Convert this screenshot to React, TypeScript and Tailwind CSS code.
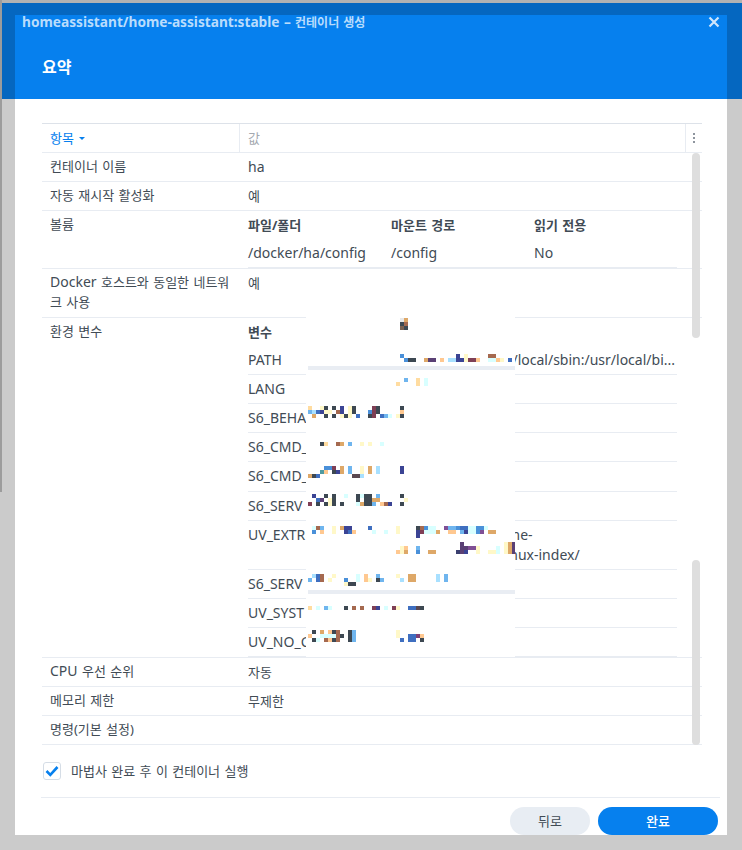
import type { ReactNode } from "react";

// ── Redaction mosaic (pixel cells in page coordinates, 4px grid) ──────────────

const dk = "#3d4852";
const nv = "#3b4494";
const bu = "#3f6fc0";
const bl = "#4a90d9";
const sk = "#6fb5ee";
const lb = "#a8e0ff";
const cy = "#d8ffff";
const py = "#fff8c8";
const ye = "#ffdca0";
const pe = "#ffc890";
const tn = "#dea868";
const br = "#a5694f";
const mr = "#7f3f55";
const pu = "#5a4075";
const vi = "#7f4f95";
const te = "#4f9aa0";
const gr = "#5a4850";

type Cell = [number, string, number?];

const MOSAIC: [number, Cell[]][] = [
  [318, [[400, "#e8e8e8"], [404, tn]]],
  [322, [[400, dk], [404, br]]],
  [326, [[400, "#7a6050"], [404, dk]]],
  [354, [[400, bl], [488, br, 2], [456, nv], [464, py]]],
  [358, [[404, bl], [408, dk, 2], [424, tn], [428, pu, 2], [440, pe], [448, lb, 2], [456, nv, 2], [464, py], [468, mr, 2], [476, pe], [488, cy, 2], [496, pe], [500, py], [508, bu]]],
  [378, [[404, sk], [416, ye], [424, cy]]],
  [382, [[396, ye], [416, ye], [424, cy]]],
  [406, [[308, ye], [320, py], [324, dk], [332, dk], [340, nv], [348, py], [352, dk], [372, mr], [376, dk], [400, dk]]],
  [410, [[308, sk], [312, lb], [316, bu], [320, nv], [324, py, 2], [336, br], [340, nv], [348, py], [352, dk], [368, bl], [372, mr], [376, dk], [400, pe]]],
  [414, [[312, tn], [324, dk], [332, dk], [340, py], [344, dk], [348, py], [356, bu], [368, dk], [372, mr], [380, bu], [384, sk], [388, cy], [396, py], [400, dk]]],
  [442, [[320, dk], [324, ye], [336, br], [340, tn], [348, sk], [360, py], [368, py], [380, cy]]],
  [466, [[324, bl, 2], [332, mr], [340, tn], [348, sk], [360, py], [368, tn], [376, lb], [400, nv]]],
  [470, [[320, te], [324, pe], [332, dk], [336, nv], [340, tn], [348, sk], [360, py], [368, tn], [376, lb], [400, nv]]],
  [474, [[308, tn], [312, dk], [316, bu], [352, gr, 2], [360, lb]]],
  [494, [[312, nv], [324, dk], [332, dk], [344, cy], [356, dk], [360, cy], [364, dk, 2], [376, sk], [400, dk]]],
  [498, [[316, bu], [320, pu], [328, py], [332, dk], [356, dk], [364, dk, 2], [372, tn, 2], [404, py]]],
  [502, [[308, mr], [316, dk], [324, dk], [328, py], [332, dk], [340, dk], [356, cy], [360, tn], [364, dk, 2], [372, sk], [380, pe], [384, br], [388, nv], [400, dk]]],
  [526, [[312, cy], [316, br], [320, sk], [332, py], [340, tn], [344, nv, 2], [368, bu], [396, py], [416, dk], [420, br], [424, bl], [428, cy, 2], [444, vi], [448, sk, 2], [456, bl], [460, bu, 2], [468, cy, 2], [476, bl, 2], [484, cy]]],
  [530, [[312, bl], [320, pe], [332, py], [344, nv], [348, bu], [352, pe], [372, cy], [384, cy], [396, py], [416, nv], [420, mr], [424, cy, 3], [436, tn], [448, pe, 2], [460, sk], [464, nv], [468, cy, 2], [476, bl], [480, vi], [488, tn, 2]]],
  [534, [[416, nv]]],
  [542, [[460, pu], [504, py], [508, tn], [512, pu]]],
  [546, [[400, py], [404, pe], [416, sk], [460, pu, 2], [468, vi, 2], [476, py], [496, cy], [504, py], [508, tn], [512, pu]]],
  [550, [[396, pe], [400, py], [404, tn], [416, bl], [428, tn, 2], [456, "#3a3f6f"], [460, pu], [464, nv], [476, py], [488, py, 2], [496, cy], [504, py], [508, tn], [512, pu]]],
  [574, [[312, lb], [316, bu], [320, br], [332, py], [356, cy], [364, pe], [376, sk], [396, py], [408, tn, 2], [436, lb], [444, sk]]],
  [578, [[308, sk], [316, bu], [320, br], [328, py], [344, bl], [356, cy], [364, pe], [368, py], [376, dk], [380, sk], [400, lb], [408, tn, 2], [436, lb], [444, sk]]],
  [582, [[344, py], [348, dk, 2]]],
  [606, [[308, ye], [316, cy], [324, sk], [328, cy], [344, dk], [352, br], [360, br], [372, mr], [376, nv], [384, cy], [392, mr], [396, py], [408, bu, 2], [416, gr], [420, dk]]],
  [630, [[312, dk], [320, tn], [328, pe], [332, dk], [336, br], [348, dk], [352, sk], [396, py]]],
  [634, [[308, pe], [320, cy, 4], [336, br], [340, dk], [348, dk], [352, sk], [396, py], [408, bu, 2], [416, "#7f3f75"], [420, pe]]],
  [638, [[312, dk], [316, cy], [324, br], [328, pe], [332, dk], [336, br], [348, dk], [352, sk], [400, bu], [408, bu, 2], [420, dk]]],
];

function RedactionMosaic() {
  return (
    <div className="absolute left-[58px] -top-px w-[209px] h-[340px] bg-white">
      <svg width={209} height={340} viewBox="306 317 209 340" shapeRendering="crispEdges" aria-hidden>
        <rect x={308} y={366} width={207} height={4} fill="#e9edf3" />
        <rect x={308} y={590} width={207} height={4} fill="#e9edf3" />
        {MOSAIC.map(([y, cells]) =>
          cells.map(([x, color, n = 1]) => (
            <rect key={`${y}-${x}`} x={x} y={y} width={4 * n} height={4} fill={color} />
          )),
        )}
      </svg>
    </div>
  );
}

// ── Table rows ────────────────────────────────────────────────────────────────

// Latin runs sit a point larger than the Hangul around them in the reference
function Latin({ children }: { children: ReactNode }) {
  return <span className="text-sm">{children}</span>;
}

function Row({ label, children }: { label: ReactNode; children?: ReactNode }) {
  return (
    <div className="flex border-b border-[#e8ecf2]">
      <div className="w-[197px] shrink-0 pl-2 pr-2 pt-[3px] pb-[5px]">{label}</div>
      <div className="flex-1 min-w-0 pl-[9px]">{children}</div>
    </div>
  );
}

function Value({ children }: { children: ReactNode }) {
  return <div className="py-1">{children}</div>;
}

function EnvRow({ name, className, children }: { name: string; className?: string; children?: ReactNode }) {
  return (
    <div className={`flex w-[429px] border-b border-[#e8ecf2] py-1 text-sm ${className ?? ""}`}>
      <div className="w-[143px] shrink-0 overflow-hidden whitespace-nowrap">{name}</div>
      <div className="flex-1 min-w-0">{children}</div>
    </div>
  );
}

function CloseIcon() {
  return (
    <svg width={12} height={12} viewBox="0 0 12 12" fill="none" stroke="#cfe5fb" strokeWidth={2.2} aria-hidden>
      <path d="M1.5 1.5l9 9M10.5 1.5l-9 9" />
    </svg>
  );
}

// ── App ───────────────────────────────────────────────────────────────────────

export default function App() {
  return (
    <div className="relative h-[850px] w-[742px] overflow-hidden bg-[#cbcbcb] pt-[15px] px-[15px] font-['Noto_Sans','Noto_Sans_CJK_KR',sans-serif] text-[13px] leading-5 text-[#414b55] [word-spacing:1px]">
      {/* window edges behind the dialog */}
      <div className="absolute left-0 top-0 h-[3px] w-full bg-[#b2b2b2]" />
      <div className="absolute left-0 top-0 h-[492px] w-[2px] bg-[#9c9c9c]" />
      <div className="absolute left-[2px] right-0 top-[3px] h-[96px] bg-[#0567c0]" />

      <div className="relative flex h-[820px] flex-col overflow-hidden bg-white">
        {/* ── Header ── */}
        <div className="h-[84px] shrink-0 bg-[#0680ee] pl-[7px]">
          <div className="flex h-[14px] items-center justify-between pr-[7px]">
            <span className="whitespace-nowrap text-xs leading-[14px] font-bold text-[#b9dcfc]">
              <span className="text-[13.7px] leading-[14px]">homeassistant/home-assistant:stable –</span> 컨테이너 생성
            </span>
            <CloseIcon />
          </div>
          <h1 className="ml-[20px] mt-[28px] text-base leading-5 font-bold text-white">요약</h1>
        </div>

        {/* ── Summary table ── */}
        <div className="relative mx-[27px] mt-6 w-[660px] border-t border-[#dde2e9]">
          <div className="flex h-[29px] border-b border-[#e8ecf2]">
            <div className="flex w-[198px] shrink-0 items-center gap-[5px] border-r border-[#e8ecf2] pl-2 text-[#0680ee]">
              항목
              <span className="mt-px h-0 w-0 border-x-[3px] border-t-[3px] border-x-transparent border-t-[#0680ee]" />
            </div>
            <div className="flex flex-1 items-center pl-2 text-[#a4a9b0]">값</div>
            <div className="flex w-[17px] shrink-0 flex-col items-center justify-center gap-[2px] border-l border-[#e8ecf2]">
              <span className="h-[2px] w-[2px] bg-[#8e959e]" />
              <span className="h-[2px] w-[2px] bg-[#8e959e]" />
              <span className="h-[2px] w-[2px] bg-[#8e959e]" />
            </div>
          </div>

          <Row label="컨테이너 이름"><Value><Latin>ha</Latin></Value></Row>
          <Row label="자동 재시작 활성화"><Value>예</Value></Row>

          <Row label="볼륨">
            <div className="w-[429px] border-b border-[#e8ecf2]">
              <div className="grid h-[28px] grid-cols-3 pt-1 font-bold">
                <span>파일/폴더</span>
                <span>마운트 경로</span>
                <span>읽기 전용</span>
              </div>
              <div className="grid h-[28px] grid-cols-3 pt-1 text-sm">
                <span>/docker/ha/config</span>
                <span>/config</span>
                <span>No</span>
              </div>
            </div>
          </Row>

          <Row label={<><Latin>Docker</Latin> 호스트와 동일한 네트워크 사용</>}><Value>예</Value></Row>

          <Row label="환경 변수">
            <div className="relative">
              <div className="h-[28px] w-[429px] pt-1 font-bold">변수</div>
              <EnvRow name="PATH">
                <div className="whitespace-nowrap pr-[2px] text-right">/local/sbin:/usr/local/bi...</div>
              </EnvRow>
              <EnvRow name="LANG" />
              <EnvRow name="S6_BEHA" />
              <EnvRow name="S6_CMD_" />
              <EnvRow name="S6_CMD_" className="h-[30px]" />
              <EnvRow name="S6_SERV" />
              <EnvRow name="UV_EXTR">
                <div className="pl-[99px] whitespace-nowrap">home-</div>
                <div className="pl-[79px] whitespace-nowrap">musllinux-index/</div>
              </EnvRow>
              <EnvRow name="S6_SERV" />
              <EnvRow name="UV_SYST" />
              <EnvRow name="UV_NO_C" />
              <RedactionMosaic />
            </div>
          </Row>

          <Row label={<><Latin>CPU</Latin> 우선 순위</>}><Value>자동</Value></Row>
          <Row label="메모리 제한"><Value>무제한</Value></Row>
          <Row label="명령(기본 설정)" />

          {/* scrollbar thumbs */}
          <div className="absolute right-[2px] top-[29px] h-[185px] w-2 rounded-full bg-[#dedede]" />
          <div className="absolute right-[2px] bottom-0 h-[185px] w-2 rounded-full bg-[#dedede]" />
        </div>

        {/* ── Run-after checkbox ── */}
        <div className="ml-[28px] mt-4 flex items-center gap-[10px]">
          <span className="flex h-[18px] w-[18px] items-center justify-center rounded-[3px] border border-[#d5dde6] bg-white">
            <svg width={14} height={12} viewBox="0 0 14 12" fill="none" stroke="#0680ee" strokeWidth={2.6} aria-hidden>
              <path d="M1.5 6l3.8 3.8L12.5 2" />
            </svg>
          </span>
          <span>마법사 완료 후 이 컨테이너 실행</span>
        </div>

        {/* ── Footer ── */}
        <div className="ml-[26px] mr-[7px] mt-4 border-t border-[#e8ecf2]" />
        <div className="mr-[9px] mt-[9px] flex justify-end gap-2">
          <button type="button" className="h-7 w-20 rounded-full bg-[#e8edf3] text-[#414b55]">뒤로</button>
          <button type="button" className="h-7 w-[120px] rounded-full bg-[#0680ee] font-medium text-white">완료</button>
        </div>
      </div>
    </div>
  );
}
